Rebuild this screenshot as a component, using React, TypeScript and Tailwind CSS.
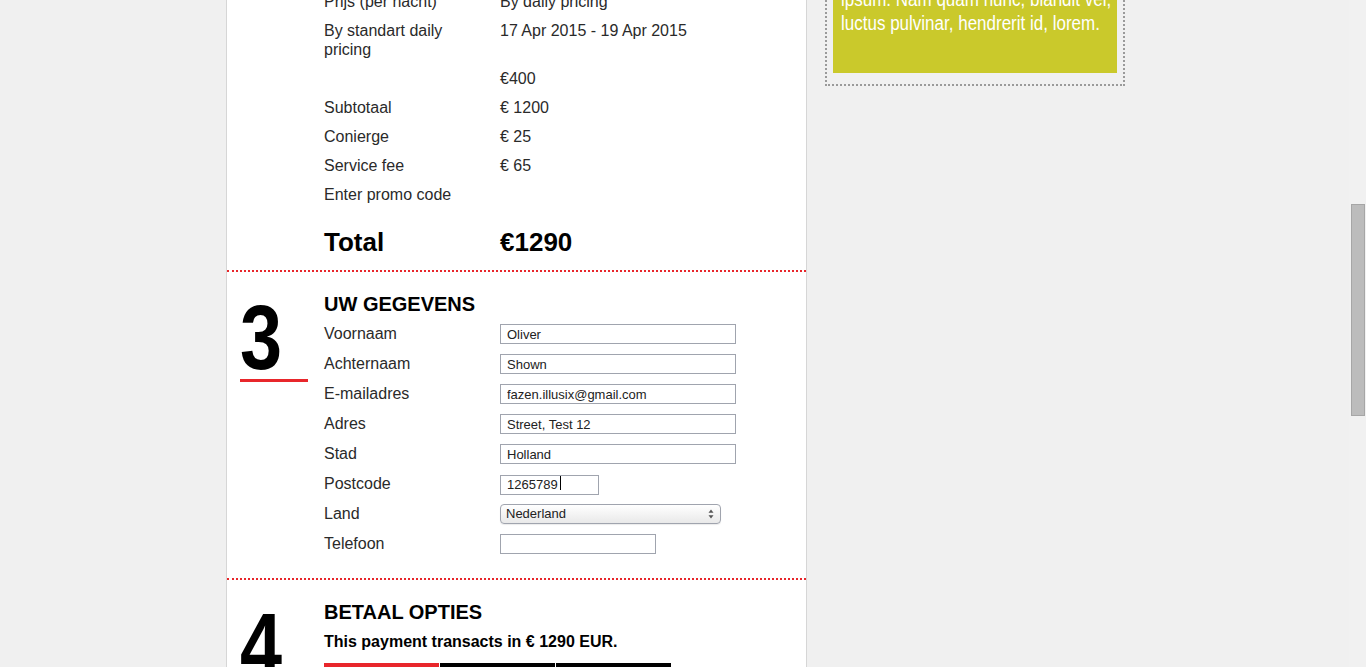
const priceRows = [
  { label: "Prijs (per nacht)", value: "By daily pricing" },
  { label: "By standart daily pricing", value: "17 Apr 2015 - 19 Apr 2015" },
  { label: "", value: "€400" },
  { label: "Subtotaal", value: "€ 1200" },
  { label: "Conierge", value: "€ 25" },
  { label: "Service fee", value: "€ 65" },
  { label: "Enter promo code", value: "" },
];

const fields = [
  { label: "Voornaam", value: "Oliver", width: "w-[236px]" },
  { label: "Achternaam", value: "Shown", width: "w-[236px]" },
  { label: "E-mailadres", value: "fazen.illusix@gmail.com", width: "w-[236px]" },
  { label: "Adres", value: "Street, Test 12", width: "w-[236px]" },
  { label: "Stad", value: "Holland", width: "w-[236px]" },
];

const inputCls =
  "h-[20px] border border-[#a0a4ae] bg-white px-[6px] text-[13px] leading-[18px] text-[#222] outline-none font-['Liberation_Sans',Arial,sans-serif]";

const StepNumber = ({ n }: { n: string }) => (
  <div className="w-[84px] shrink-0 pt-[6px]">
    <div className="h-[80px] origin-left scale-x-[0.84] text-[90px] leading-[80px] font-bold text-black">
      {n}
    </div>
    <div className="mt-[1px] h-[3px] w-[68px] bg-[#e8262b]" />
  </div>
);

const FormRow = ({ label, children }: { label: string; children: React.ReactNode }) => (
  <div className="flex h-[30px] items-center">
    <div className="w-[176px] pb-[2px] text-[16px] leading-[19px] text-[#2a2a2a]">{label}</div>
    {children}
  </div>
);

export default function App() {
  return (
    <div className="flex h-[667px] w-full overflow-hidden bg-[#f0f0f0] font-['Liberation_Sans',Arial,sans-serif]">
      <div className="flex flex-1 items-start pl-[226px]">
        {/* main booking panel */}
        <div className="h-full w-[581px] shrink-0 border-x border-[#d6d6d6] bg-white">
          {/* price overview (scrolled) */}
          <div className="-mt-[8px] border-b-2 border-dotted border-[#e8262b] pb-[13px] pl-[97px]">
            <div className="flex flex-col gap-[10px] text-[16px] leading-[19px] text-[#2a2a2a]">
              {priceRows.map((r, i) => (
                <div key={i} className="flex">
                  <div className="w-[176px] shrink-0 pr-[16px]">{r.label}</div>
                  <div>{r.value}</div>
                </div>
              ))}
            </div>
            <div className="mt-[23px] flex text-[26px] font-bold leading-[30px] text-black">
              <div className="w-[176px]">Total</div>
              <div>€1290</div>
            </div>
          </div>

          {/* step 3 */}
          <div className="flex border-b-2 border-dotted border-[#e8262b] pb-[19px] pl-[13px] pt-[20px]">
            <StepNumber n="3" />
            <div className="flex-1">
              <h2 className="text-[20px] font-bold leading-[24px] text-black">UW GEGEVENS</h2>
              <div className="mt-[3px]">
                {fields.map((f) => (
                  <FormRow key={f.label} label={f.label}>
                    <input readOnly defaultValue={f.value} className={`${inputCls} ${f.width}`} />
                  </FormRow>
                ))}
                <FormRow label="Postcode">
                  <div className="relative">
                    <input readOnly defaultValue="1265789" className={`${inputCls} w-[99px]`} />
                    <span className="absolute left-[60px] top-[4px] h-[14px] w-px bg-black" />
                  </div>
                </FormRow>
                <FormRow label="Land">
                  <div className="relative h-[20px] w-[221px] rounded-[4px] border border-[#a0a4ae] bg-gradient-to-b from-white to-[#e9e9e9] shadow-[0_1px_1px_rgba(0,0,0,0.08)]">
                    <div className="px-[5px] text-[13px] leading-[18px] text-[#222]">Nederland</div>
                    <svg
                      className="absolute right-[6px] top-[4px]"
                      width="6"
                      height="10"
                      viewBox="0 0 6 10"
                    >
                      <path d="M3 0.5 L5.5 3.8 H0.5 Z" fill="#555" />
                      <path d="M3 9.5 L5.5 6.2 H0.5 Z" fill="#555" />
                    </svg>
                  </div>
                </FormRow>
                <FormRow label="Telefoon">
                  <input readOnly defaultValue="" className={`${inputCls} w-[156px]`} />
                </FormRow>
              </div>
            </div>
          </div>

          {/* step 4 */}
          <div className="flex pl-[13px] pt-[20px]">
            <StepNumber n="4" />
            <div className="flex-1">
              <h2 className="text-[20px] font-bold leading-[24px] text-black">BETAAL OPTIES</h2>
              <p className="mt-[8px] text-[16px] font-bold leading-[20px] text-black">
                This payment transacts in € 1290 EUR.
              </p>
              <div className="mt-[11px] flex gap-px">
                <div className="h-[36px] w-[115px] bg-[#e8262b]" />
                <div className="h-[36px] w-[115px] bg-black" />
                <div className="h-[36px] w-[115px] bg-black" />
              </div>
            </div>
          </div>
        </div>

        {/* sidebar promo */}
        <div className="-mt-[33px] ml-[18px] w-[300px] shrink-0 border-2 border-dotted border-[#9a9a9a] px-[6px] pb-[11px] pt-[6px]">
          <div className="bg-[#cac92b] px-[8px] pb-[38px] pt-[12px] text-[20px] leading-[24px] text-white">
            <div className="origin-left scale-x-[0.85] whitespace-nowrap">ipsum. Nam quam nunc, blandit vel,</div>
            <div className="origin-left scale-x-[0.85] whitespace-nowrap">luctus pulvinar, hendrerit id, lorem.</div>
          </div>
        </div>
      </div>

      {/* window scrollbar */}
      <div className="w-[17px] shrink-0 bg-[#f1f1f1]">
        <div className="ml-[2px] mt-[204px] h-[212px] w-[14px] border border-[#a6a6a6] bg-[#bcbcbc]" />
      </div>
    </div>
  );
}
